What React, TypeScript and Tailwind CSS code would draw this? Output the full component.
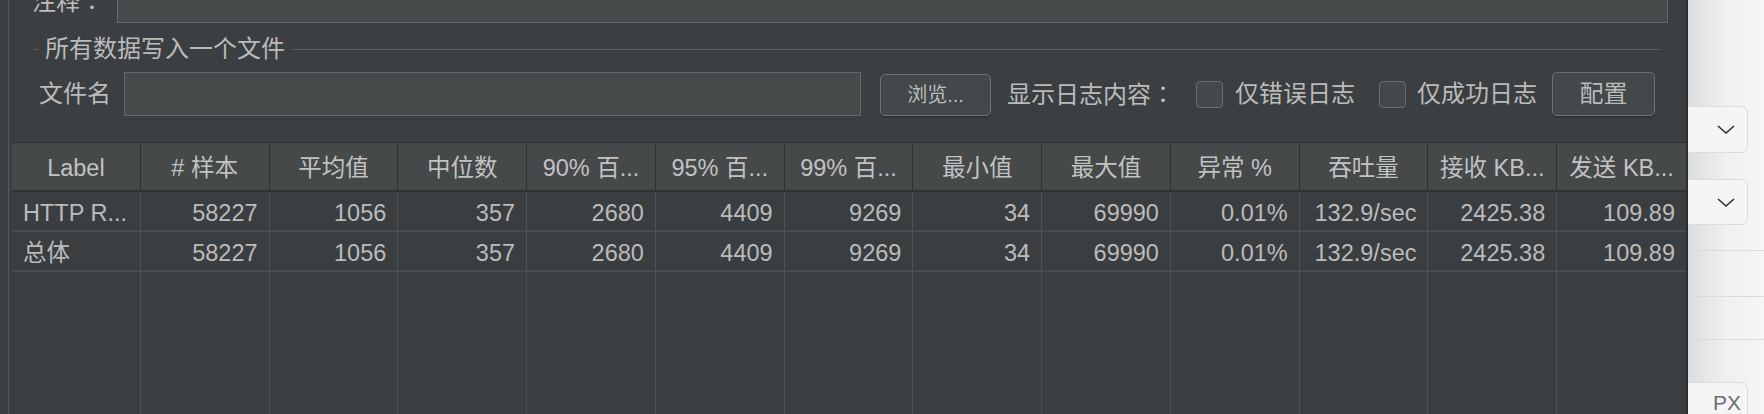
const headers = [
  "Label",
  "# 样本",
  "平均值",
  "中位数",
  "90% 百...",
  "95% 百...",
  "99% 百...",
  "最小值",
  "最大值",
  "异常 %",
  "吞吐量",
  "接收 KB...",
  "发送 KB...",
];

const values = [
  "58227",
  "1056",
  "357",
  "2680",
  "4409",
  "9269",
  "34",
  "69990",
  "0.01%",
  "132.9/sec",
  "2425.38",
  "109.89",
];

const rows = [
  ["HTTP R...", ...values],
  ["总体", ...values],
];

function Checkbox() {
  return (
    <div className="h-[27px] w-[27px] shrink-0 rounded-[4px] border border-[#6a6d70] bg-[#43494a]" />
  );
}

function DarkButton({ label, className }: { label: string; className: string }) {
  return (
    <button
      type="button"
      className={`flex shrink-0 items-center justify-center rounded-[5px] border border-[#6e7174] bg-[#43494a] text-[#bbbbbb] shadow-[0_2px_0_#303234] ${className}`}
    >
      {label}
    </button>
  );
}

function Colon() {
  return <span className="font-['Noto_Sans_CJK_TC',sans-serif]">：</span>;
}

function Chevron() {
  return (
    <svg width="18" height="9" viewBox="0 0 18 9" fill="none">
      <path d="M1 1 L9 8 L17 1" stroke="#303133" strokeWidth="1.6" />
    </svg>
  );
}

function ResultsPanel() {
  return (
    <div className="flex h-full w-[1688px] shrink-0 bg-[#3c3f41] pl-[8px]">
      <div className="flex h-full flex-1 flex-col border-l border-r-2 border-l-[#56595b] border-r-[#2c2e30] text-[24px]">
        <div className="-mt-[21px] flex h-[44px] shrink-0 items-center">
          <span className="ml-[23px] w-[85px] shrink-0 whitespace-nowrap leading-none">
            注释
            <Colon />
          </span>
          <div className="h-[44px] w-[1551px] border border-[#65686a] bg-[#464a4b]" />
        </div>

        <div className="mt-[12px] flex h-[28px] shrink-0 items-center">
          <div className="ml-[24px] h-px w-[6px] bg-[#595c5e]" />
          <span className="mx-[6px] leading-none">所有数据写入一个文件</span>
          <div className="h-px w-[1370px] bg-[#595c5e]" />
        </div>

        <div className="mt-[9px] flex h-[44px] shrink-0 items-center">
          <span className="ml-[30px] w-[85px] shrink-0 leading-none">文件名</span>
          <div className="h-[44px] w-[737px] shrink-0 border border-[#65686a] bg-[#464a4b]" />
          <DarkButton label="浏览..." className="ml-[19px] mt-[2px] h-[42px] w-[111px] text-[20px]" />
          <span className="ml-[16px] w-[189px] shrink-0 whitespace-nowrap leading-none">
            显示日志内容
            <Colon />
          </span>
          <Checkbox />
          <span className="ml-[12px] w-[144px] shrink-0 leading-none">仅错误日志</span>
          <Checkbox />
          <span className="ml-[11px] w-[135px] shrink-0 leading-none">仅成功日志</span>
          <DarkButton label="配置" className="h-[44px] w-[103px] text-[24px]" />
        </div>

        <div className="ml-[3px] mt-[26px] flex flex-1 flex-col border-t border-[#303234] text-[23.5px]">
          <div className="grid h-[49px] shrink-0 grid-cols-[repeat(13,minmax(0,1fr))] border-b-2 border-[#303234] bg-[#45494a]">
            {headers.map((header) => (
              <div
                key={header}
                className="flex items-center justify-center whitespace-nowrap border-r border-[#2f3133] pt-[5px] text-[#c2c2c2] last:border-r-0"
              >
                {header}
              </div>
            ))}
          </div>

          {rows.map((row, rowIndex) => (
            <div
              key={rowIndex}
              className="grid h-[40px] shrink-0 grid-cols-[repeat(13,minmax(0,1fr))] border-b-2 border-[#4a4d50] bg-[#3b3e40]"
            >
              {row.map((cell, cellIndex) => (
                <div
                  key={cellIndex}
                  className={`flex items-center whitespace-nowrap border-r border-[#515457] px-[11px] pt-[4px] last:border-r-0 ${
                    cellIndex === 0 ? "justify-start" : "justify-end"
                  }`}
                >
                  {cell}
                </div>
              ))}
            </div>
          ))}

          <div className="grid flex-1 grid-cols-[repeat(13,minmax(0,1fr))]">
            {headers.map((header) => (
              <div key={header} className="border-r border-[#4d5053] last:border-r-0" />
            ))}
          </div>
        </div>
      </div>
    </div>
  );
}

function SideStrip() {
  return (
    <div className="flex h-full flex-1 flex-col overflow-hidden bg-linear-to-r from-[#dcdddf] via-[#f0f0f1] to-[#f6f6f7]">
      <div className="-ml-[30px] mt-[106px] flex h-[47px] w-[90px] shrink-0 items-center justify-end rounded-[7px] border border-[#d8dbe0] bg-[#f5f5f6] pr-[12px]">
        <Chevron />
      </div>
      <div className="-ml-[30px] mt-[26px] flex h-[46px] w-[90px] shrink-0 items-center justify-end rounded-[7px] border border-[#d8dbe0] bg-[#f5f5f6] pr-[12px]">
        <Chevron />
      </div>
      <div className="mt-[25px] h-px w-full shrink-0 bg-[#d8dbe0]" />
      <div className="mt-[45px] h-px w-full shrink-0 bg-[#d8dbe0]" />
      <div className="mt-[42px] h-px w-full shrink-0 bg-[#d8dbe0]" />
      <div className="-ml-[30px] mt-[42px] flex h-[32px] w-[90px] shrink-0 items-end justify-end rounded-t-[7px] border border-b-0 border-[#d8dbe0] bg-[#f5f5f6] pr-[6px]">
        <span className="text-[21px] leading-[22px] text-[#6b6e73]">PX</span>
      </div>
    </div>
  );
}

export default function App() {
  return (
    <div className="flex h-[414px] w-[1764px] overflow-hidden font-['Liberation_Sans','Noto_Sans_CJK_SC',sans-serif] text-[23px] text-[#bbbbbb]">
      <ResultsPanel />
      <SideStrip />
    </div>
  );
}
